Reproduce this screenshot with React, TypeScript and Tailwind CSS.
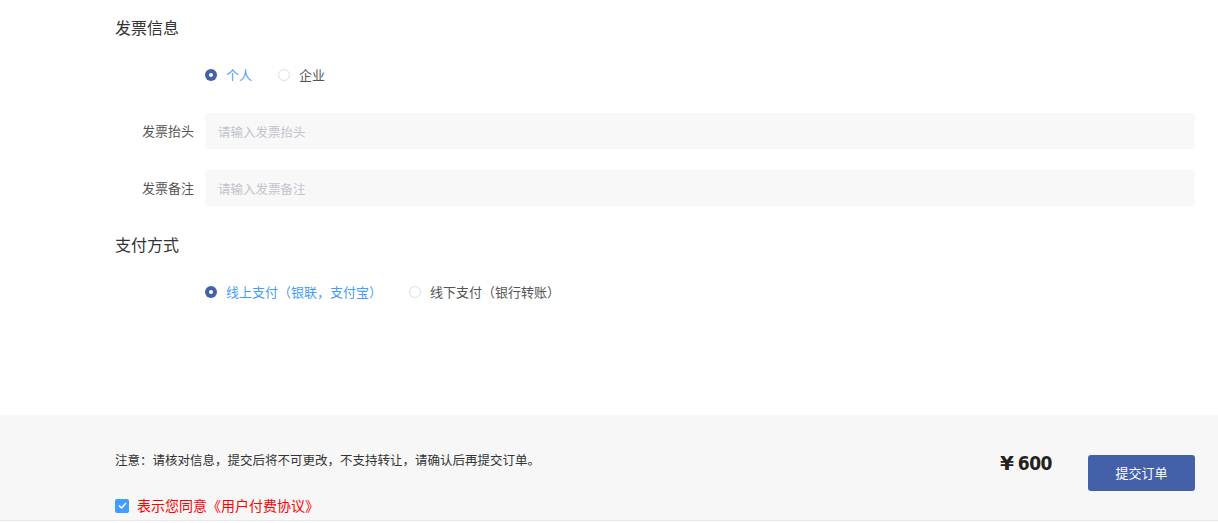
import { useState } from "react";

const font = { fontFamily: '"Microsoft YaHei", "Noto Sans CJK SC", sans-serif' };

function Radio({
  checked,
  label,
  onClick,
}: {
  checked: boolean;
  label: string;
  onClick: () => void;
}) {
  return (
    <label onClick={onClick} className="flex items-center cursor-pointer">
      {checked ? (
        <span className="w-[12px] h-[12px] rounded-full bg-[#4460a8] flex items-center justify-center">
          <span className="w-[4px] h-[4px] rounded-full bg-white" />
        </span>
      ) : (
        <span className="w-[12px] h-[12px] rounded-full border border-[#dcdfe6] bg-white" />
      )}
      <span
        className={
          "ml-[9px] text-[13px] " +
          (checked ? "text-[#4a9df7]" : "text-[#555]")
        }
      >
        {label}
      </span>
    </label>
  );
}

export default function App() {
  const [invoiceType, setInvoiceType] = useState("personal");
  const [payType, setPayType] = useState("online");
  const [agree, setAgree] = useState(true);

  return (
    <div className="w-[1218px] h-[523px] bg-white overflow-hidden" style={font}>
      <div className="h-[415px] pl-[115px] pr-[23px] pt-[15px]">
        {/* 发票信息 */}
        <h2 className="h-[24px] leading-[24px] text-[16px] text-[#333]">发票信息</h2>
        <div className="mt-[26px] h-[20px] ml-[90px] flex items-center gap-[26px]">
          <Radio
            checked={invoiceType === "personal"}
            label="个人"
            onClick={() => setInvoiceType("personal")}
          />
          <Radio
            checked={invoiceType === "company"}
            label="企业"
            onClick={() => setInvoiceType("company")}
          />
        </div>
        <div className="mt-[28px] flex items-center">
          <span className="w-[90px] pr-[11px] text-right text-[13px] text-[#555]">发票抬头</span>
          <input
            placeholder="请输入发票抬头"
            className="flex-1 h-[36px] rounded-[4px] bg-[#f8f8f8] px-[13px] text-[12.5px] outline-none placeholder:text-[#c0c4cc]"
          />
        </div>
        <div className="mt-[21px] flex items-center">
          <span className="w-[90px] pr-[11px] text-right text-[13px] text-[#555]">发票备注</span>
          <input
            placeholder="请输入发票备注"
            className="flex-1 h-[36px] rounded-[4px] bg-[#f8f8f8] px-[13px] text-[12.5px] outline-none placeholder:text-[#c0c4cc]"
          />
        </div>

        {/* 支付方式 */}
        <h2 className="mt-[26px] h-[24px] leading-[24px] text-[16px] text-[#333]">支付方式</h2>
        <div className="mt-[26px] h-[20px] ml-[90px] flex items-center gap-[27px]">
          <Radio
            checked={payType === "online"}
            label="线上支付（银联，支付宝）"
            onClick={() => setPayType("online")}
          />
          <Radio
            checked={payType === "offline"}
            label="线下支付（银行转账）"
            onClick={() => setPayType("offline")}
          />
        </div>
      </div>

      {/* 底部 */}
      <div className="h-[106px] bg-[#f7f7f7] border-b border-[#e8e8e8] pl-[115px] pr-[23px] flex justify-between">
        <div>
          <p className="mt-[36px] h-[18px] leading-[18px] text-[12.5px] text-[#333]">
            注意：请核对信息，提交后将不可更改，不支持转让，请确认后再提交订单。
          </p>
          <div className="mt-[26px] flex items-center">
            <span
              onClick={() => setAgree(!agree)}
              className={
                "w-[14px] h-[14px] rounded-[2px] flex items-center justify-center cursor-pointer " +
                (agree ? "bg-[#409eff]" : "bg-white border border-[#dcdfe6]")
              }
            >
              {agree && (
                <svg width="9" height="7" viewBox="0 0 9 7" fill="none">
                  <path d="M1 3.5L3.5 6L8 1" stroke="white" strokeWidth="1.4" />
                </svg>
              )}
            </span>
            <span className="ml-[8px] text-[14px] text-[#ff0000]">表示您同意《用户付费协议》</span>
          </div>
        </div>
        <div className="flex items-start">
          <div className="mt-[36px] h-[24px] flex items-center text-[#222] font-bold">
            <span className="text-[20px]" style={{ fontFamily: '"DejaVu Sans", sans-serif' }}>¥</span>
            <span
              className="ml-[4px] text-[19px] tracking-[-0.5px]"
              style={{ fontFamily: '"DejaVu Sans Condensed", "Liberation Sans Narrow", sans-serif' }}
            >
              600
            </span>
          </div>
          <button className="ml-[36px] mt-[40px] w-[107px] h-[36px] rounded-[3px] bg-[#4460a9] text-white text-[13px]">
            提交订单
          </button>
        </div>
      </div>
    </div>
  );
}
